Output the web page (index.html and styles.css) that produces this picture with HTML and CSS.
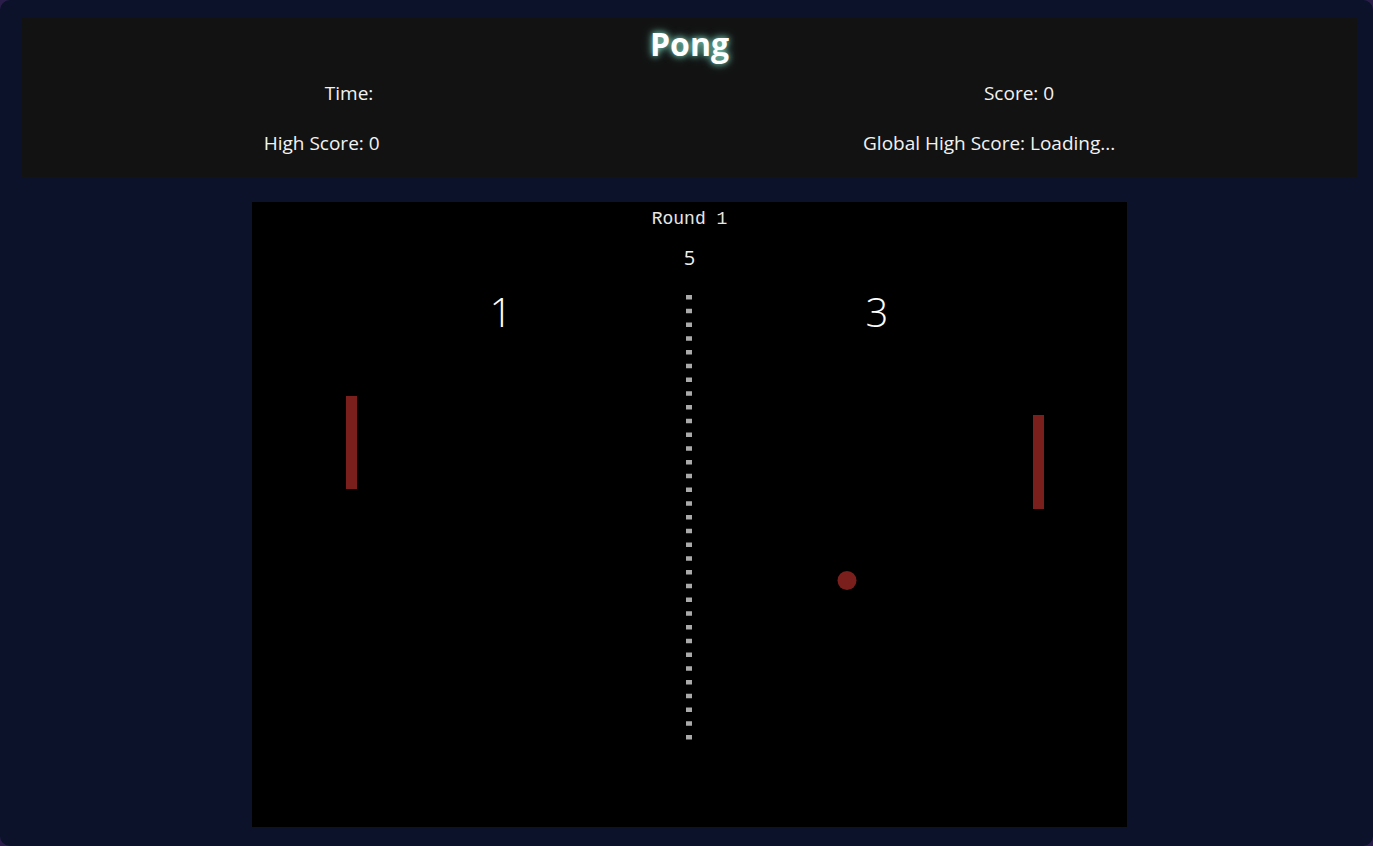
FILE: index.html
```html
<!DOCTYPE html>
<html lang="en">
<head>
<meta charset="utf-8">
<title>Pong</title>
<link rel="stylesheet" href="styles.css">
</head>
<body>
<div class="app">
  <header class="panel">
    <h1 class="title">Pong</h1>
    <div class="stats-row">
      <p class="stat">Time: <span class="val"></span></p>
      <p class="stat">Score: <span class="val">0</span></p>
    </div>
    <div class="stats-row">
      <p class="stat">High Score: <span class="val">0</span></p>
      <p class="stat">Global High Score: <span class="val">Loading...</span></p>
    </div>
  </header>
  <main class="stage">
    <div class="field">
      <svg class="board" width="875" height="625" viewBox="0 0 875 625" xmlns="http://www.w3.org/2000/svg">
        <rect x="0" y="0" width="875" height="625" fill="#000"/>
        <text class="round" x="437.5" y="22" text-anchor="middle">Round 1</text>
        <text class="timer" x="437.5" y="63" text-anchor="middle">5</text>
        <text class="score" x="249" y="125" text-anchor="middle">1</text>
        <text class="score" x="625" y="125" text-anchor="middle">3</text>
        <line x1="437" y1="93" x2="437" y2="539" stroke="#aaaaaa" stroke-width="6" stroke-dasharray="4.6 9.15"/>
        <rect x="94" y="194" width="11" height="93" fill="#7a1f1c"/>
        <rect x="781" y="213" width="11" height="94" fill="#7a1f1c"/>
        <circle cx="595" cy="378.5" r="9.5" fill="#7a1f1c"/>
      </svg>
    </div>
  </main>
</div>
</body>
</html>
```
FILE: styles.css
```css
* { box-sizing: border-box; }
html, body { height: 100%; }
body {
  margin: 0;
  background: #2a1d4a;
  font-family: "Open Sans", "Noto Sans", sans-serif;
  color: #f2f2f2;
  overflow: hidden;
}
.app {
  height: 846px;
  background: #0b1229;
  border-radius: 10px;
  padding: 18px 16px 0 22px;
  display: flex;
  flex-direction: column;
}
.panel {
  background: #121212;
  height: 159px;
  padding-top: 6px;
  display: flex;
  flex-direction: column;
}
.title {
  margin: 0;
  text-align: center;
  font-size: 32px;
  line-height: 40px;
  font-weight: 700;
  color: #ffffff;
  text-shadow: 0 0 6px rgba(150, 255, 225, 0.85), 0 0 12px rgba(120, 230, 210, 0.45);
}
.stats-row {
  display: flex;
  justify-content: space-around;
  height: 50px;
  align-items: center;
}
.stats-row:first-of-type { margin-top: 4px; }
.stat {
  margin: 0;
  font-size: 19px;
  line-height: 26px;
  white-space: pre;
}
.stage {
  margin-top: 25px;
  display: flex;
  justify-content: center;
}
.field {
  width: 875px;
  height: 625px;
  background: #000;
}
.board { display: block; }
.round {
  font-family: "Liberation Mono", monospace;
  font-size: 18px;
  fill: #e6e6e6;
}
.timer {
  font-family: "Open Sans", sans-serif;
  font-size: 20px;
  fill: #f0f0f0;
}
.score {
  font-family: "Open Sans", sans-serif;
  font-weight: 300;
  font-size: 40px;
  fill: #ffffff;
}
```
